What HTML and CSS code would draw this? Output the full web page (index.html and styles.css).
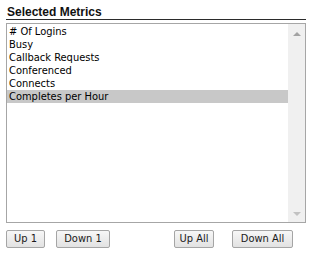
FILE: index.html
```html
<!DOCTYPE html>
<html>
<head>
<meta charset="utf-8">
<link rel="stylesheet" href="styles.css">
</head>
<body>
<div class="panel">
  <div class="title">Selected Metrics</div>
  <div class="listbox">
    <div class="items">
      <div class="item">#&nbsp;Of Logins</div>
      <div class="item">Busy</div>
      <div class="item">Callback Requests</div>
      <div class="item">Conferenced</div>
      <div class="item">Connects</div>
      <div class="item selected">Completes per Hour</div>
    </div>
    <div class="scrollbar">
      <span class="arrow up"></span>
      <span class="arrow down"></span>
    </div>
  </div>
  <div class="actions">
    <div class="group">
      <button class="btn btn-up1">Up 1</button>
      <button class="btn btn-down1">Down 1</button>
    </div>
    <div class="group right">
      <button class="btn btn-upall">Up All</button>
      <button class="btn btn-downall">Down All</button>
    </div>
  </div>
</div>
</body>
</html>
```
FILE: styles.css
```css
html, body {
  margin: 0;
  padding: 0;
  background: #fff;
}
body {
  font-family: "DejaVu Sans Condensed", "DejaVu Sans", Verdana, sans-serif;
  color: #000;
}
.panel {
  width: 300px;
  padding: 5px 0 0 6px;
}
.title {
  font-family: "Liberation Sans", Arial, sans-serif;
  font-size: 12px;
  font-weight: bold;
  line-height: 14px;
  padding: 0 0 0 1px;
  height: 14px;
  border-bottom: 1px solid #2b2b2b;
  color: #111;
}
.listbox {
  margin-top: 3px;
  height: 198px;
  border: 1px solid #a6a6a6;
  display: flex;
}
.items {
  flex: 1;
  padding-top: 1px;
}
.item {
  height: 13px;
  line-height: 13px;
  font-size: 11px;
  padding-left: 2px;
  white-space: nowrap;
}
.item.selected {
  background: #c8c8c8;
}
.scrollbar {
  width: 17px;
  background: #f0f0f0;
  display: flex;
  flex-direction: column;
  justify-content: space-between;
  align-items: center;
  padding: 8px 0 6px;
}
.arrow {
  width: 0;
  height: 0;
  border-left: 4px solid transparent;
  border-right: 4px solid transparent;
}
.arrow.up {
  border-bottom: 4px solid #a3a3a3;
}
.arrow.down {
  border-top: 4px solid #c2c2c2;
}
.actions {
  display: flex;
  justify-content: space-between;
  margin-top: 7px;
}
.group {
  display: flex;
  gap: 11px;
}
.group.right {
  gap: 18px;
  padding-right: 13px;
}
.btn {
  font-family: "DejaVu Sans Condensed", "DejaVu Sans", Verdana, sans-serif;
  font-size: 11px;
  color: #1a1a1a;
  height: 18px;
  line-height: 14px;
  padding: 0;
  margin: 0;
  border: 1px solid #a5a5a5;
  border-radius: 2px;
  background: linear-gradient(#f7f7f7, #e2e2e2);
  text-align: center;
}
.btn-up1 { width: 39px; }
.btn-down1 { width: 54px; }
.btn-upall { width: 40px; }
.btn-downall { width: 61px; }
```
